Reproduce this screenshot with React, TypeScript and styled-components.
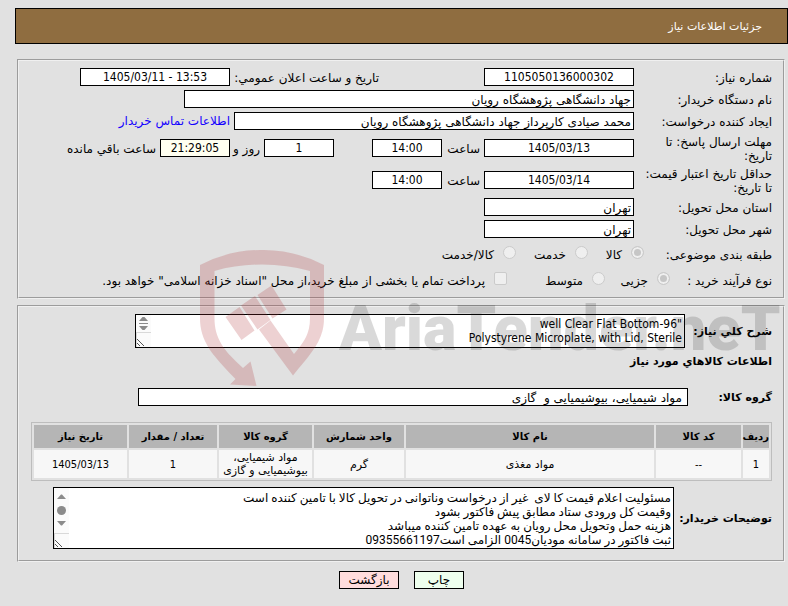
import React from "react";
import styled, { createGlobalStyle, css } from "styled-components";

const latin = `"DejaVu Sans Condensed", "DejaVu Sans", sans-serif`;
const persian = `"DejaVu Sans", sans-serif`;
const mixed = `Roboto, "DejaVu Sans", sans-serif`;

const GlobalStyle = createGlobalStyle`
  * { box-sizing: border-box; }
  body {
    margin: 0;
    background: #e1e1e1;
    color: #000;
    font: 12px/14px ${persian};
  }
`;

const Page = styled.main`
  position: relative;
  direction: rtl;
  padding: 8px 0 18px 15px;
  overflow: hidden;
`;

const TitleBar = styled.header`
  display: flex;
  align-items: center;
  height: 36px;
  padding: 2px 25px 0;
  margin-bottom: 15px;
  border: 1px solid #000;
  background: #8f6d40;
  color: #fff;
`;

const Title = styled.h1`
  margin: 0;
  font-size: 11px;
  font-weight: 400;
`;

const Panel = styled.section`
  margin: 0 3px 6px 2px;
  padding: 5px 11px 5px 12px;
  border: 2px groove #f0f0f0;
`;

const Row = styled.div<{ $height?: number }>`
  display: flex;
  align-items: center;
  gap: 4px;
  min-height: ${(p) => p.$height ?? 22}px;
`;

const labelStyle = css<{ $width: number; $bold?: boolean }>`
  flex: none;
  width: ${(p) => p.$width}px;
  padding-top: 1px;
  font-size: ${(p) => (p.$bold ? 11 : 12)}px;
  font-weight: ${(p) => (p.$bold ? 700 : 400)};
  white-space: nowrap;
`;

const Label = styled.label`
  ${labelStyle}
`;

const Caption = styled.span`
  ${labelStyle}
`;

const Field = styled.input<{ $width: number; $text?: boolean; $tint?: boolean; $inset?: boolean }>`
  flex: 0 1 ${(p) => p.$width}px;
  width: ${(p) => p.$width}px;
  min-width: 0;
  height: 18px;
  margin: 0;
  padding: ${(p) => (p.$text ? 1 : 0)}px ${(p) => (p.$inset ? 5 : 2)}px 0;
  border: 1px solid #000;
  background: ${(p) => (p.$tint ? "#fffff0" : "#fff")};
  color: #000;
  font: 12px/15px ${(p) => (p.$text ? persian : latin)};
  text-align: ${(p) => (p.$text ? "right" : "center")};
`;

const Link = styled.a`
  color: #1400ff;
  text-decoration: none;
  white-space: nowrap;
`;

const Spacer = styled.span<{ $width: number }>`
  flex: none;
  width: ${(p) => p.$width}px;
`;

const OptionRow = styled.div`
  display: flex;
  align-items: center;
  min-height: 26px;
  padding-top: 3px;
`;

const Option = styled.label<{ $width?: number }>`
  display: flex;
  flex: ${(p) => (p.$width ? "none" : "1")};
  align-items: flex-start;
  gap: 9px;
  width: ${(p) => (p.$width ? `${p.$width}px` : "auto")};
  line-height: 18px;
  white-space: nowrap;
`;

const Radio = styled.input.attrs({ type: "radio", disabled: true })`
  appearance: none;
  flex: none;
  width: 13px;
  height: 13px;
  margin: 0;
  border: 1px solid #cbcbcb;
  border-radius: 50%;
  background: #efefef;
  &:checked {
    background: #c6c6c6;
    box-shadow: inset 0 0 0 2px #efefef;
  }
`;

const Checkbox = styled.input.attrs({ type: "checkbox", disabled: true })`
  appearance: none;
  flex: none;
  width: 13px;
  height: 13px;
  margin: 0;
  border: 1px solid #cbcbcb;
  border-radius: 2px;
  background: #efefef;
`;

const MemoRow = styled.div`
  display: flex;
  align-items: center;
  margin: 2px 0 6px;
`;

const Memo = styled.div<{ $width: number; $height: number }>`
  display: flex;
  flex: 0 1 ${(p) => p.$width}px;
  min-width: 0;
  height: ${(p) => p.$height}px;
  border: 1px solid #000;
  background: #fff;
`;

const MemoText = styled.textarea<{ $latin?: boolean }>`
  flex: 1;
  min-width: 0;
  height: 100%;
  margin: 0;
  padding: ${(p) => (p.$latin ? 2 : 3)}px 2px 0;
  border: 0;
  outline: 0;
  resize: none;
  overflow: hidden;
  background: transparent;
  color: #000;
  font: 12px/14px ${(p) => (p.$latin ? latin : persian)};
`;

const ScrollStrip = styled.svg`
  flex: none;
  width: 15px;
  height: 100%;
  background: #fbfbfb;
`;

const Heading = styled.h2`
  margin: 0 0 17px;
  padding-top: 1px;
  font-size: 11px;
  line-height: 14px;
  font-weight: 700;
`;

const GoodsTable = styled.table`
  width: 100%;
  margin: 14px 0 6px;
  border: 1px solid #bdbdbd;
  border-collapse: separate;
  border-spacing: 2px;
  table-layout: fixed;
  text-align: center;
`;

const Th = styled.th<{ $width?: number }>`
  width: ${(p) => (p.$width ? `${p.$width}px` : "auto")};
  height: 23px;
  padding: 0;
  background: #b5b5b5;
  font-size: 10px;
  line-height: 13px;
  white-space: nowrap;
`;

const Td = styled.td<{ $latin?: boolean }>`
  height: 28px;
  padding: 1px 0;
  background: #f7f7f7;
  font: 11px/13px ${(p) => (p.$latin ? latin : persian)};
`;

const Actions = styled.div`
  display: flex;
  justify-content: center;
  gap: 15px;
  margin-top: 9px;
`;

const Button = styled.button<{ $width: number; $color: string }>`
  width: ${(p) => p.$width}px;
  height: 18px;
  padding: 0;
  border: 1px solid #000;
  background: ${(p) => p.$color};
  color: #000;
  font: 12px/16px ${persian};
`;

const Watermark = styled.svg`
  position: absolute;
  top: 245px;
  left: 197px;
  width: 591px;
  height: 145px;
  pointer-events: none;
`;

const Wordmark = styled.text`
  font: 900 63px Roboto, sans-serif;
  fill: rgba(30, 30, 30, 0.17);
`;

const columns = [
  { title: "رديف", width: 26 },
  { title: "کد کالا", width: 85 },
  { title: "نام کالا" },
  { title: "واحد شمارش", width: 90 },
  { title: "گروه کالا", width: 93 },
  { title: "تعداد / مقدار", width: 88 },
  { title: "تاريخ نياز", width: 93 },
];

const goods = [["1", "--", "مواد مغذی", "گرم", "مواد شیمیایی، بیوشیمیایی و گازی", "1", "1405/03/13"]];

const summary = `"96-well Clear Flat Bottom\nPolystyrene Microplate, with Lid, Sterile`;

const notes = [
  "مسئولیت اعلام قیمت کا لای  غیر از درخواست وناتوانی در تحویل کالا با تامین کننده است",
  "وقیمت کل ورودی ستاد مطابق پیش فاکتور بشود",
  "هزینه حمل وتحویل محل رویان به عهده تامین کننده میباشد",
  "ثبت فاکتور در سامانه مودیان0045 الزامی است09355661197",
].join("\n");

const NotesText = styled(MemoText)`
  font-family: ${mixed};
`;

function SmallScroll() {
  return (
    <ScrollStrip viewBox="0 0 15 32" aria-hidden="true">
      <path d="M3 6h9L8.500 2h-2zM3 11h9L8.500 15h-2z" fill="#8b8b8b" />
      <path d="M3 8.500h9" stroke="#8b8b8b" />
      <path d="M0 17.500h15M.5 18v14" stroke="#d9d9d9" fill="none" />
      <path d="M1 24l7 7M1 28l3 3" stroke="#555" />
    </ScrollStrip>
  );
}

function LargeScroll() {
  return (
    <ScrollStrip viewBox="0 0 15 60" aria-hidden="true">
      <path d="M3 11h9L8 6.500H7zM3 33h9L8 37.500H7z" fill="#8b8b8b" />
      <circle cx="7.500" cy="22.500" r="4.500" fill="#8b8b8b" />
      <path d="M0 45.500h15M.5 46v14" stroke="#d9d9d9" fill="none" />
      <path d="M1 52l7 7M1 56l3 3" stroke="#555" />
    </ScrollStrip>
  );
}

function Logo() {
  return (
    <Watermark viewBox="197 245 591 145" direction="ltr" aria-hidden="true">
      <g fill="rgba(172,46,48,.22)">
        <path d="M200 265Q230 249.500 262 250Q294 249.500 324 265V318C324 341 311 353 293 375.500L259 329.500L270.500 320.500L294 354C304 342 310 334 310 318V271Q287 264.500 262 264.500Q237 264.500 214.500 271V318C214.500 338 223 350 243 368L250.500 361.500L256.500 386L230 384.500L235.500 379C212 355 200 341 200 318Z" />
        <path d="M239.500 307L254.500 330.500L241.500 340L225.500 317ZM241 305.500L255 296L270.500 320L257.500 329.500ZM257.500 295L271.500 285.500L286.500 309.500L272.500 318.500Z" />
      </g>
      <Wordmark x="339" y="350">AriaTender.neT</Wordmark>
    </Watermark>
  );
}

export default function App() {
  return (
    <Page lang="fa">
      <GlobalStyle />
      <TitleBar>
        <Title>جزئیات اطلاعات نیاز</Title>
      </TitleBar>

      <Panel>
        <Row>
          <Label $width={134} htmlFor="number">شماره نیاز:</Label>
          <Field id="number" $width={150} readOnly value="1105050136000302" />
          <Spacer $width={97} />
          <Label $width={145} htmlFor="announced">تاريخ و ساعت اعلان عمومي:</Label>
          <Field id="announced" dir="ltr" $width={150} readOnly value="1405/03/11 - 13:53" />
        </Row>
        <Row>
          <Label $width={134} htmlFor="buyer">نام دستگاه خریدار:</Label>
          <Field id="buyer" $width={450} $text readOnly value="جهاد دانشگاهی پژوهشگاه رویان" />
        </Row>
        <Row>
          <Label $width={134} htmlFor="creator">ایجاد کننده درخواست:</Label>
          <Field id="creator" $width={400} $text readOnly value="محمد صیادی کارپرداز جهاد دانشگاهی پژوهشگاه رویان" />
          <Link href="#contact">اطلاعات تماس خریدار</Link>
        </Row>
        <Row $height={32}>
          <Label $width={134} htmlFor="reply-date">مهلت ارسال پاسخ: تا<br />تاریخ:</Label>
          <Field id="reply-date" $width={150} readOnly value="1405/03/13" />
          <Label $width={34} htmlFor="reply-time">ساعت</Label>
          <Field id="reply-time" $width={70} readOnly value="14:00" />
          <Spacer $width={30} />
          <Field id="days" $width={70} readOnly value="1" />
          <Label $width={26} htmlFor="days">روز و</Label>
          <Field id="remaining" $width={70} $tint readOnly value="21:29:05" />
          <Label $width={96} htmlFor="remaining">ساعت باقي مانده</Label>
        </Row>
        <Row $height={32}>
          <Label $width={134} htmlFor="price-date">حداقل تاریخ اعتبار قیمت:<br />تا تاریخ:</Label>
          <Field id="price-date" $width={150} readOnly value="1405/03/14" />
          <Label $width={34} htmlFor="price-time">ساعت</Label>
          <Field id="price-time" $width={70} readOnly value="14:00" />
        </Row>
        <Row>
          <Label $width={134} htmlFor="province">استان محل تحویل:</Label>
          <Field id="province" $width={150} $text readOnly value="تهران" />
        </Row>
        <Row>
          <Label $width={134} htmlFor="city">شهر محل تحویل:</Label>
          <Field id="city" $width={150} $text readOnly value="تهران" />
        </Row>
        <OptionRow role="radiogroup" aria-label="طبقه بندی موضوعی">
          <Caption $width={128}>طبقه بندی موضوعی:</Caption>
          <Option $width={56}><Radio name="subject" defaultChecked />کالا</Option>
          <Option $width={72}><Radio name="subject" />خدمت</Option>
          <Option><Radio name="subject" />کالا/خدمت</Option>
        </OptionRow>
        <OptionRow role="radiogroup" aria-label="نوع فرآیند خرید">
          <Caption $width={102}>نوع فرآیند خرید :</Caption>
          <Option $width={65}><Radio name="process" defaultChecked />جزیی</Option>
          <Option $width={98}><Radio name="process" />متوسط</Option>
          <Option><Checkbox />پرداخت تمام یا بخشی از مبلغ خرید،از محل "اسناد خزانه اسلامی" خواهد بود.</Option>
        </OptionRow>
      </Panel>

      <Panel>
        <MemoRow>
          <Label $width={87} $bold htmlFor="summary">شرح کلي نياز:</Label>
          <Memo $width={550} $height={34}>
            <MemoText id="summary" $latin readOnly value={summary} />
            <SmallScroll />
          </Memo>
        </MemoRow>
        <Heading>اطلاعات کالاهاي مورد نياز</Heading>
        <Row>
          <Label $width={80} $bold htmlFor="group">گروه کالا:</Label>
          <Field id="group" $width={550} $text $inset readOnly value="مواد شیمیایی، بیوشیمیایی و  گازی" />
        </Row>
        <GoodsTable>
          <thead>
            <tr>
              {columns.map((c) => <Th key={c.title} $width={c.width}>{c.title}</Th>)}
            </tr>
          </thead>
          <tbody>
            {goods.map((row) => (
              <tr key={row[0]}>
                {row.map((cell, i) => <Td key={i} $latin={/^[\d/-]+$/.test(cell)}>{cell}</Td>)}
              </tr>
            ))}
          </tbody>
        </GoodsTable>
        <MemoRow>
          <Label $width={98} $bold htmlFor="notes">توضیحات خریدار:</Label>
          <Memo $width={621} $height={62}>
            <NotesText id="notes" readOnly value={notes} />
            <LargeScroll />
          </Memo>
        </MemoRow>
      </Panel>

      <Actions>
        <Button $width={50} $color="#eeffee">چاپ</Button>
        <Button $width={60} $color="#ffdddd">بازگشت</Button>
      </Actions>
      <Logo />
    </Page>
  );
}
